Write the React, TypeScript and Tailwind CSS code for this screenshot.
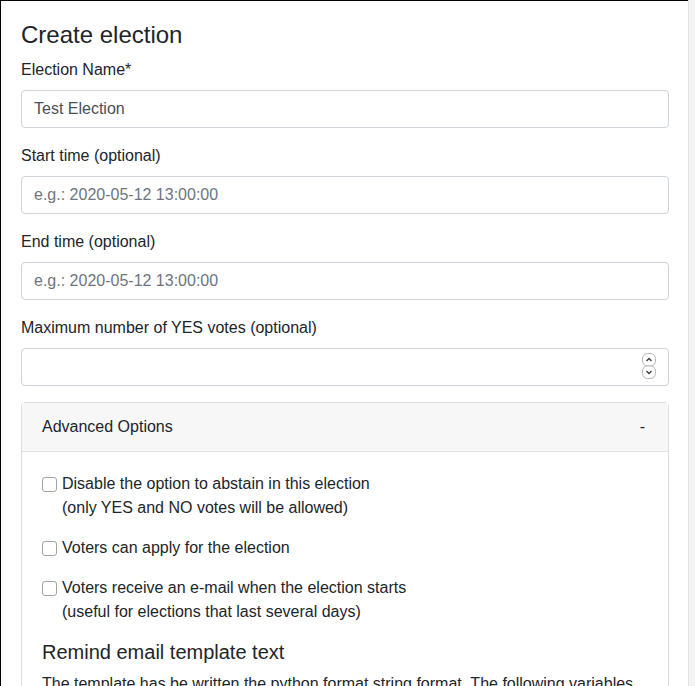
const font = { fontFamily: '"Liberation Sans", Arial, sans-serif' };

function Field({ label, placeholder, value }: { label: string; placeholder?: string; value?: string }) {
  return (
    <div className="mb-4">
      <label className="mb-2 block text-base leading-6">{label}</label>
      <div className="flex h-[38px] items-center rounded border border-[#ced4da] bg-white px-3 text-base">
        {value ? <span className="text-[#495057]">{value}</span> : <span className="text-[#6c757d]">{placeholder}</span>}
      </div>
    </div>
  );
}

function NumberField({ label }: { label: string }) {
  return (
    <div className="mb-4">
      <label className="mb-2 block text-base leading-6">{label}</label>
      <div className="flex h-[38px] items-center justify-end rounded border border-[#ced4da] bg-white pr-[12px]">
        <svg width="14" height="27" viewBox="0 0 14 27" className="text-[#3b3b3b]">
          <rect x="0.5" y="0.5" width="13" height="12.5" rx="5" fill="white" stroke="#b5b5b5" />
          <rect x="0.5" y="13" width="13" height="12.5" rx="5" fill="white" stroke="#b5b5b5" />
          <path d="M4.5 8 L7 5.5 L9.5 8" fill="none" stroke="currentColor" strokeWidth="1.3" />
          <path d="M4.5 18 L7 20.5 L9.5 18" fill="none" stroke="currentColor" strokeWidth="1.3" />
        </svg>
      </div>
    </div>
  );
}

function Check({ lines }: { lines: string[] }) {
  return (
    <div className="relative mb-4 pl-5 leading-6">
      <span className="absolute left-0 top-[5px] h-[15px] w-[15px] rounded-[3px] border border-[#a3a3a3] bg-white" />
      {lines.map((l) => (
        <div key={l}>{l}</div>
      ))}
    </div>
  );
}

export default function App() {
  return (
    <div className="flex h-[686px] w-[695px] overflow-hidden bg-white text-[#212529]" style={font}>
      <div className="w-[688px] shrink-0 border-l border-t border-black pl-5 pr-[19px] pt-5">
        <h4 className="mb-2 text-2xl leading-[1.2]">Create election</h4>
        <Field label="Election Name*" value="Test Election" />
        <Field label="Start time (optional)" placeholder="e.g.: 2020-05-12 13:00:00" />
        <Field label="End time (optional)" placeholder="e.g.: 2020-05-12 13:00:00" />
        <NumberField label="Maximum number of YES votes (optional)" />

        <div className="rounded border border-[#dfdfdf]">
          <div className="flex items-center justify-between border-b border-[#dfdfdf] bg-[#f7f7f7] px-5 py-3 leading-6">
            <span>Advanced Options</span>
            <span className="pr-[3px]">-</span>
          </div>
          <div className="p-5">
            <Check lines={["Disable the option to abstain in this election", "(only YES and NO votes will be allowed)"]} />
            <Check lines={["Voters can apply for the election"]} />
            <Check lines={["Voters receive an e-mail when the election starts", "(useful for elections that last several days)"]} />
            <h5 className="mb-2 text-xl leading-6">Remind email template text</h5>
            <p className="leading-6">
              The template has be written the python format string format. The following variables are available:
            </p>
          </div>
        </div>
      </div>
      <div className="flex-1 border-l border-[#e2e2e2] bg-[#f3f3f3]" />
    </div>
  );
}
